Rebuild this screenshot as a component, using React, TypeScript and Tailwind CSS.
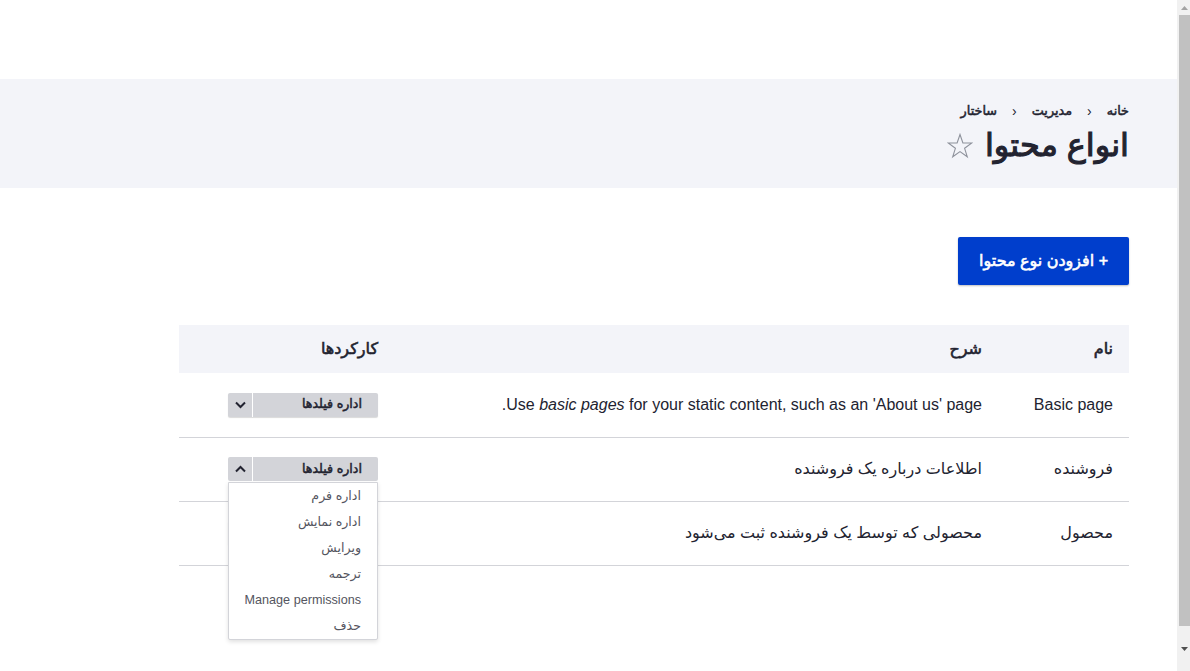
import { useState } from "react";

interface ContentType {
  name: string;
  description: React.ReactNode;
}

const rows: ContentType[] = [
  {
    name: "Basic page",
    description: (
      <>
        Use <em>basic pages</em> for your static content, such as an 'About us' page.
      </>
    ),
  },
  { name: "فروشنده", description: "اطلاعات درباره یک فروشنده" },
  { name: "محصول", description: "محصولی که توسط یک فروشنده ثبت می‌شود" },
];

const menuItems = [
  "اداره فرم",
  "اداره نمایش",
  "ویرایش",
  "ترجمه",
  "Manage permissions",
  "حذف",
];

const Chevron = ({ up }: { up: boolean }) => (
  <svg width="11" height="8" viewBox="0 0 11 8" className="block">
    <path
      d={up ? "M1 6.5 L5.5 2 L10 6.5" : "M1 1.5 L5.5 6 L10 1.5"}
      fill="none"
      stroke="#222330"
      strokeWidth="2"
    />
  </svg>
);

const Dropbutton = ({ open, onToggle }: { open: boolean; onToggle: () => void }) => (
  <div className="relative w-[150px]">
    <div
      className={`flex h-6 rounded-[2px] bg-[#d3d4d9] ${open ? "shadow-none" : "shadow-[0_1px_1px_rgba(0,0,0,0.15)]"}`}
    >
      <button className="flex-1 border-l border-white pr-4 text-right text-[12.64px] font-normal text-[#222330] [-webkit-text-stroke-width:0.5px]">
        اداره فیلدها
      </button>
      <button onClick={onToggle} className="flex w-6 items-center justify-center">
        <Chevron up={open} />
      </button>
    </div>
    {open && (
      <ul className="absolute right-0 top-[25px] z-10 w-[150px] rounded-b-[2px] border border-[#d3d4d9] bg-white shadow-[0_2px_4px_rgba(0,0,0,0.12)]">
        {menuItems.map((item) => (
          <li
            key={item}
            className="flex h-[26px] items-center pr-4 text-[12.64px] text-[#545560]"
          >
            {item}
          </li>
        ))}
      </ul>
    )}
  </div>
);

const Scrollbar = () => (
  <div className="flex h-[671px] w-[13px] shrink-0 flex-col bg-[#f1f1f1]">
    <div className="flex h-[15px] items-center justify-center pl-[2px]">
      <svg width="7" height="4" viewBox="0 0 7 4">
        <polygon points="3.5,0 7,4 0,4" fill="#a3a3a3" />
      </svg>
    </div>
    <div className="ml-[2px] h-[611px] bg-[#c1c1c1]" />
    <div className="flex flex-1 items-center justify-center pl-[2px]">
      <svg width="7" height="4" viewBox="0 0 7 4">
        <polygon points="0,0 7,0 3.5,4" fill="#505050" />
      </svg>
    </div>
  </div>
);

const App = () => {
  const [openRow, setOpenRow] = useState<number | null>(1);

  return (
    <div
      dir="rtl"
      className="flex h-[671px] overflow-hidden bg-white text-[#222330]"
      style={{ fontFamily: '"Liberation Sans", "DejaVu Sans", sans-serif' }}
    >
      <Scrollbar />
      <main className="flex-1">
        <div className="h-[79px] bg-white" />

        <div className="flex h-[109px] flex-col bg-[#f3f4f9] pr-[48px] pt-[22px]">
          <nav className="flex items-center gap-[15px] text-[12.8px] leading-5 [-webkit-text-stroke-width:0.5px]">
            <span>خانه</span>
            <span className="text-[14px] [-webkit-text-stroke-width:0px]">‹</span>
            <span>مدیریت</span>
            <span className="text-[14px] [-webkit-text-stroke-width:0px]">‹</span>
            <span>ساختار</span>
          </nav>
          <div className="mt-[4px] flex items-center gap-[12px]">
            <h1 className="text-[32px] font-normal leading-[40px] [-webkit-text-stroke-width:1.1px]">
              انواع محتوا
            </h1>
            <svg width="26" height="26" viewBox="0 0 26 26" className="mt-[2px]">
              <polygon
                points="13,1.5 15.9,10 24.8,10 17.6,15.3 20.3,23.8 13,18.6 5.7,23.8 8.4,15.3 1.2,10 10.1,10"
                fill="none"
                stroke="#8e929c"
                strokeWidth="1.1"
              />
            </svg>
          </div>
        </div>

        <div className="pr-[48px] pt-[49px]">
          <button className="h-[48px] rounded-[2px] bg-[#003ecc] px-[21px] text-[16px] font-normal text-white shadow-[0_1px_2px_rgba(0,0,0,0.25)] [-webkit-text-stroke-width:0.6px]">
            + افزودن نوع محتوا
          </button>

          <table className="mt-[40px] w-[950px] table-fixed border-collapse">
            <thead>
              <tr className="h-[48px] bg-[#f3f4f9] text-right text-[16px] [-webkit-text-stroke-width:0.6px]">
                <th className="w-[131px] pr-4 font-normal">نام</th>
                <th className="w-[604px] pr-4 font-normal">شرح</th>
                <th className="pr-4 font-normal">کارکردها</th>
              </tr>
            </thead>
            <tbody>
              {rows.map((row, i) => (
                <tr key={i} className="h-[64px] border-b border-[#d3d4d9] text-[16px]">
                  <td className="pr-4">{row.name}</td>
                  <td className="pr-4">{row.description}</td>
                  <td className="pr-4">
                    <Dropbutton
                      open={openRow === i}
                      onToggle={() => setOpenRow(openRow === i ? null : i)}
                    />
                  </td>
                </tr>
              ))}
            </tbody>
          </table>
        </div>
      </main>
    </div>
  );
};

export default App;
